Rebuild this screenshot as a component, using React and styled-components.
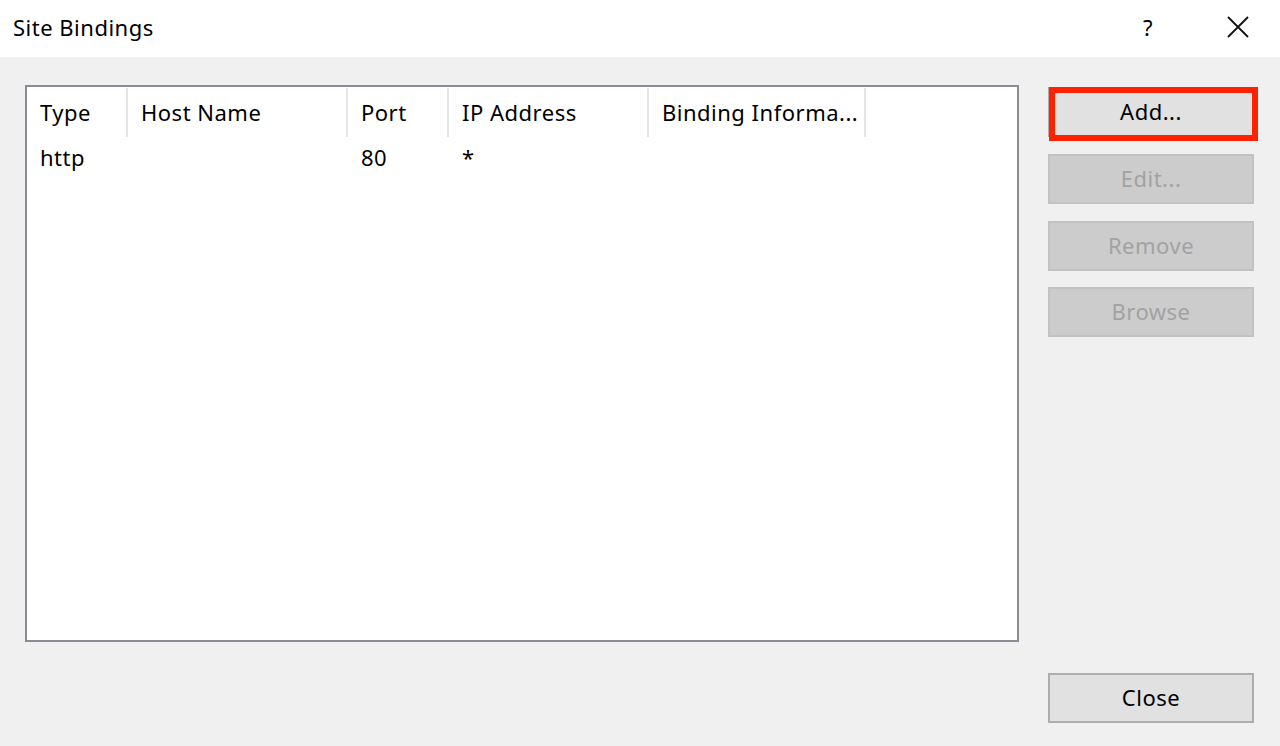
import React from "react";
import styled, { createGlobalStyle } from "styled-components";

const GlobalStyle = createGlobalStyle`
  html, body { margin: 0; padding: 0; background: #f0f0f0; }
  body { font-family: "Noto Sans", "Open Sans", "DejaVu Sans", sans-serif; color: #000; }
  * { box-sizing: border-box; }
`;

const Dialog = styled.div`
  width: 1280px;
  height: 746px;
  display: flex;
  flex-direction: column;
  background: #f0f0f0;
  overflow: hidden;
  font-size: 22px;
  letter-spacing: 0.5px;
`;

const TitleBar = styled.div`
  height: 57px;
  flex: none;
  background: #ffffff;
  display: flex;
  align-items: center;
  padding-left: 13px;
`;

const TitleText = styled.div`
  flex: 1;
  margin-top: -4px;
`;

const TitleButton = styled.div`
  width: ${(p) => p.$w}px;
  height: 52px;
  display: flex;
  align-items: center;
  justify-content: center;
  margin-top: -4px;
`;

const Body = styled.div`
  flex: 1;
  display: flex;
  padding: 28px 26px 23px 25px;
`;

const ListView = styled.div`
  width: 994px;
  height: 557px;
  background: #ffffff;
  border: 2px solid #898c93;
  display: flex;
  flex-direction: column;
`;

const HeaderRow = styled.div`
  height: 50px;
  display: flex;
`;

const HeaderCell = styled.div`
  width: ${(p) => p.$w}px;
  flex: none;
  display: flex;
  align-items: center;
  padding-left: 13px;
  white-space: nowrap;
  position: relative;
  &::after {
    content: "";
    position: absolute;
    right: 0;
    top: 1px;
    bottom: 0;
    width: 2px;
    background: #e5e5e5;
  }
`;

const DataRow = styled.div`
  height: 40px;
  display: flex;
`;

const DataCell = styled.div`
  width: ${(p) => p.$w}px;
  flex: none;
  display: flex;
  align-items: center;
  padding-left: 13px;
  white-space: nowrap;
`;

const Side = styled.div`
  margin-left: 29px;
  margin-top: 2px;
  width: 206px;
  display: flex;
  flex-direction: column;
  justify-content: space-between;
`;

const ButtonStack = styled.div`
  display: flex;
  flex-direction: column;
  gap: 16.8px;
`;

const ButtonWrap = styled.div`
  position: relative;
`;

const Button = styled.div`
  width: 206px;
  height: 50px;
  display: flex;
  align-items: center;
  justify-content: center;
  padding-bottom: 2px;
  background: ${(p) => (p.$disabled ? "#cccccc" : "#e1e1e1")};
  border: 2px solid ${(p) => (p.$disabled ? "#c2c2c2" : "#adadad")};
  color: ${(p) => (p.$disabled ? "#a2a2a2" : "#000")};
`;

const Highlight = styled.div`
  position: absolute;
  left: 1px;
  top: 0;
  width: 209px;
  height: 54px;
  border: 6px solid #fe2200;
  pointer-events: none;
`;

const columns = [
  { w: 101, h: "Type", v: "http" },
  { w: 220, h: "Host Name", v: "" },
  { w: 101, h: "Port", v: "80" },
  { w: 200, h: "IP Address", v: "*" },
  { w: 217, h: "Binding Informa...", v: "" },
];

export default function App() {
  return (
    <>
      <GlobalStyle />
      <Dialog>
        <TitleBar>
          <TitleText>Site Bindings</TitleText>
          <TitleButton $w={96}>?</TitleButton>
          <TitleButton $w={84}>
            <svg width="22" height="22" viewBox="0 0 22 22">
              <path d="M1 1 L21 21 M21 1 L1 21" stroke="#111" strokeWidth="1.8" fill="none" />
            </svg>
          </TitleButton>
        </TitleBar>
        <Body>
          <ListView>
            <HeaderRow>
              {columns.map((c) => (
                <HeaderCell key={c.h} $w={c.w}>{c.h}</HeaderCell>
              ))}
            </HeaderRow>
            <DataRow>
              {columns.map((c) => (
                <DataCell key={c.h} $w={c.w}>{c.v}</DataCell>
              ))}
            </DataRow>
          </ListView>
          <Side>
            <ButtonStack>
              <ButtonWrap>
                <Button>Add...</Button>
                <Highlight />
              </ButtonWrap>
              <Button $disabled>Edit...</Button>
              <Button $disabled>Remove</Button>
              <Button $disabled>Browse</Button>
            </ButtonStack>
            <Button>Close</Button>
          </Side>
        </Body>
      </Dialog>
    </>
  );
}
